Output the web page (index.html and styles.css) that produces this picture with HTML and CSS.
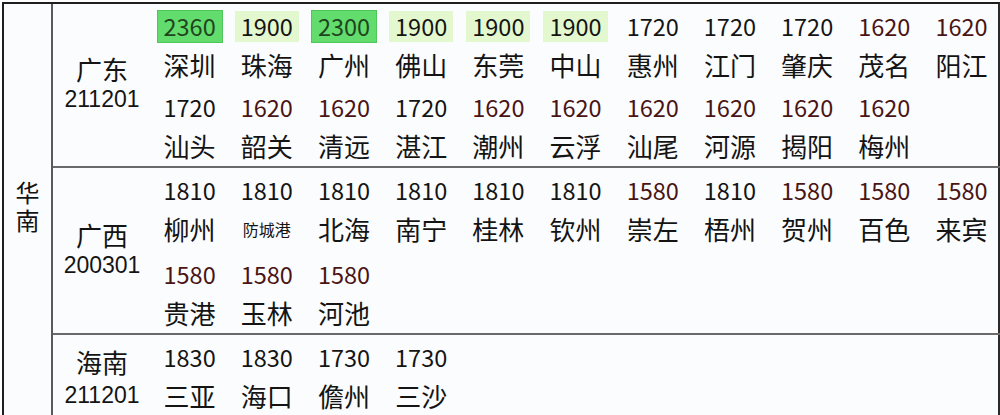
FILE: index.html
```html
<!DOCTYPE html>
<html lang="zh-CN">
<head>
<meta charset="utf-8">
<title>华南</title>
<link rel="stylesheet" href="styles.css">
</head>
<body>
<div class="sheet">
  <div class="region"><span class="rc">华</span><span class="rc">南</span></div>
  <div class="provinces">
    <div class="prov-block">
      <div class="prov-name"><span class="pn">广东</span><span class="pc">211201</span></div>
      <div class="cities">
        <div class="item"><div class="num"><span class="hl-strong">2360</span></div><div class="city">深圳</div></div>
        <div class="item"><div class="num"><span class="hl-soft">1900</span></div><div class="city">珠海</div></div>
        <div class="item"><div class="num"><span class="hl-strong">2300</span></div><div class="city">广州</div></div>
        <div class="item"><div class="num"><span class="hl-soft">1900</span></div><div class="city">佛山</div></div>
        <div class="item"><div class="num"><span class="hl-soft">1900</span></div><div class="city">东莞</div></div>
        <div class="item"><div class="num"><span class="hl-soft">1900</span></div><div class="city">中山</div></div>
        <div class="item"><div class="num"><span>1720</span></div><div class="city">惠州</div></div>
        <div class="item"><div class="num"><span>1720</span></div><div class="city">江门</div></div>
        <div class="item"><div class="num"><span>1720</span></div><div class="city">肇庆</div></div>
        <div class="item"><div class="num low"><span>1620</span></div><div class="city">茂名</div></div>
        <div class="item"><div class="num low"><span>1620</span></div><div class="city">阳江</div></div>
        <div class="item"><div class="num"><span>1720</span></div><div class="city">汕头</div></div>
        <div class="item"><div class="num low"><span>1620</span></div><div class="city">韶关</div></div>
        <div class="item"><div class="num low"><span>1620</span></div><div class="city">清远</div></div>
        <div class="item"><div class="num"><span>1720</span></div><div class="city">湛江</div></div>
        <div class="item"><div class="num low"><span>1620</span></div><div class="city">潮州</div></div>
        <div class="item"><div class="num low"><span>1620</span></div><div class="city">云浮</div></div>
        <div class="item"><div class="num low"><span>1620</span></div><div class="city">汕尾</div></div>
        <div class="item"><div class="num low"><span>1620</span></div><div class="city">河源</div></div>
        <div class="item"><div class="num low"><span>1620</span></div><div class="city">揭阳</div></div>
        <div class="item"><div class="num low"><span>1620</span></div><div class="city">梅州</div></div>
      </div>
    </div>
    <div class="prov-block wide-rows">
      <div class="prov-name"><span class="pn">广西</span><span class="pc">200301</span></div>
      <div class="cities">
        <div class="item"><div class="num"><span>1810</span></div><div class="city">柳州</div></div>
        <div class="item"><div class="num"><span>1810</span></div><div class="city small">防城港</div></div>
        <div class="item"><div class="num"><span>1810</span></div><div class="city">北海</div></div>
        <div class="item"><div class="num"><span>1810</span></div><div class="city">南宁</div></div>
        <div class="item"><div class="num"><span>1810</span></div><div class="city">桂林</div></div>
        <div class="item"><div class="num"><span>1810</span></div><div class="city">钦州</div></div>
        <div class="item"><div class="num low"><span>1580</span></div><div class="city">崇左</div></div>
        <div class="item"><div class="num"><span>1810</span></div><div class="city">梧州</div></div>
        <div class="item"><div class="num low"><span>1580</span></div><div class="city">贺州</div></div>
        <div class="item"><div class="num low"><span>1580</span></div><div class="city">百色</div></div>
        <div class="item"><div class="num low"><span>1580</span></div><div class="city">来宾</div></div>
        <div class="item"><div class="num low"><span>1580</span></div><div class="city">贵港</div></div>
        <div class="item"><div class="num low"><span>1580</span></div><div class="city">玉林</div></div>
        <div class="item"><div class="num low"><span>1580</span></div><div class="city">河池</div></div>
      </div>
    </div>
    <div class="prov-block last">
      <div class="prov-name"><span class="pn">海南</span><span class="pc">211201</span></div>
      <div class="cities">
        <div class="item"><div class="num"><span>1830</span></div><div class="city">三亚</div></div>
        <div class="item"><div class="num"><span>1830</span></div><div class="city">海口</div></div>
        <div class="item"><div class="num"><span>1730</span></div><div class="city">儋州</div></div>
        <div class="item"><div class="num"><span>1730</span></div><div class="city">三沙</div></div>
      </div>
    </div>
  </div>
</div>
</body>
</html>
```
FILE: styles.css
```css
html, body {
  margin: 0;
  padding: 0;
  background: #ffffff;
}
body {
  font-family: "Noto Sans CJK SC", "Noto Sans", sans-serif;
  color: #141414;
  overflow: hidden;
}
.sheet {
  display: flex;
  margin: 2px 0 0 2px;
  width: 994px;
  border-top: 2px solid #1e1e1e;
  border-left: 2px solid #1e1e1e;
  border-right: 2px solid #2a2a2a;
  background: #fbfcfe;
}
.region {
  width: 47px;
  flex: none;
  border-right: 2px solid #5a5a5a;
  display: flex;
  flex-direction: column;
  align-items: center;
  justify-content: center;
  padding-bottom: 14px;
}
.rc {
  display: block;
  height: 28px;
  line-height: 28px;
  font-size: 24px;
  font-family: "Liberation Sans", "Noto Sans CJK SC", sans-serif;
}
.provinces {
  flex: 1;
  display: flex;
  flex-direction: column;
}
.prov-block {
  display: flex;
  border-bottom: 2px solid #6a6a6a;
}
.prov-block.last {
  border-bottom: none;
  min-height: 90px;
}
.prov-name {
  width: 98px;
  flex: none;
  display: flex;
  flex-direction: column;
  align-items: center;
  justify-content: center;
  font-family: "Liberation Sans", "Noto Sans CJK SC", sans-serif;
}
.pn {
  display: block;
  height: 28px;
  line-height: 28px;
  font-size: 26px;
}
.pc {
  display: block;
  height: 28px;
  line-height: 28px;
  font-size: 23px;
}
.last .pc {
  height: 32px;
  line-height: 34px;
}
.cities {
  display: grid;
  grid-template-columns: repeat(11, 77.2px);
  grid-auto-rows: 78px;
  row-gap: 3px;
  padding: 3px 0 0 0;
  align-content: start;
}
.wide-rows .cities {
  row-gap: 6px;
}
.item {
  display: flex;
  flex-direction: column;
}
.num {
  height: 38px;
  display: flex;
  align-items: center;
  justify-content: center;
  font-size: 23.5px;
}
.num span {
  display: inline-block;
  line-height: 31px;
  padding: 0 6px;
}
.num.low {
  color: #4a1414;
}
.hl-strong {
  background: #62dc6c;
  border: 1px solid #4fc65a;
  color: #1f451f;
  padding: 0 8px;
}
.hl-soft {
  background: #e4f8cf;
}
.city {
  height: 40px;
  line-height: 40px;
  text-align: center;
  font-size: 26px;
}
.city.small {
  font-size: 16px;
}
```
